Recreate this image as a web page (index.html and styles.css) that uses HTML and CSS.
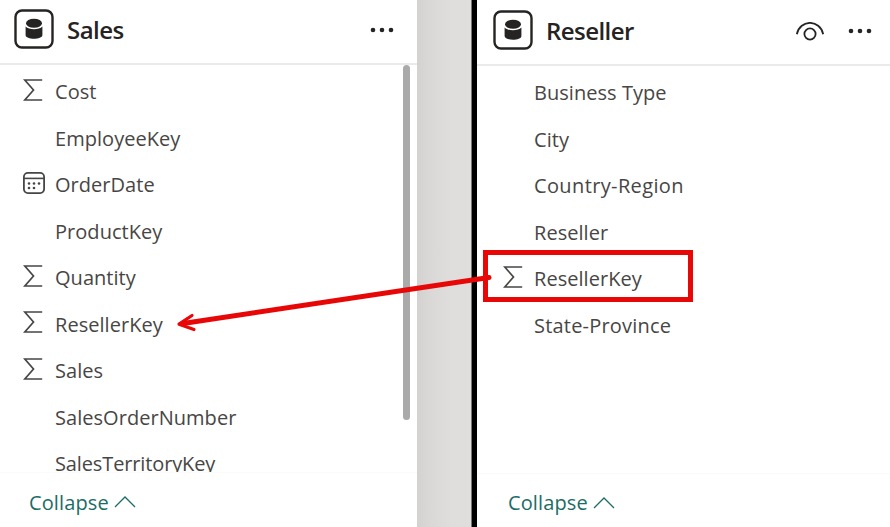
FILE: index.html
```
<!DOCTYPE html>
<html lang="en">
<head>
<meta charset="utf-8">
<title>Model view</title>
<link rel="stylesheet" href="styles.css">
</head>
<body>
<svg class="defs" aria-hidden="true">
  <symbol id="table" viewBox="0 0 40 40"><rect x="1.5" y="1.5" width="37" height="37" rx="6.5" fill="none" stroke="#252423" stroke-width="2.4"/><ellipse cx="20" cy="14.3" rx="8" ry="4.5" fill="#252423"/><path d="M11.6 17.5C15 21.2 25 21.2 28.4 17.5V26C28.4 31 11.6 31 11.6 26Z" fill="#252423"/></symbol>
  <symbol id="sum" viewBox="0 0 20 24"><path d="M19.2 2H1.8L10.5 12L1.8 22H19.2" fill="none" stroke="#484644" stroke-width="1.7"/></symbol>
  <symbol id="calendar" viewBox="0 0 22 22"><rect x=".9" y=".9" width="20.2" height="20.2" rx="4" fill="none" stroke="#484644" stroke-width="1.8"/><path d="M1 6.4H21" stroke="#484644" stroke-width="1.6"/><g fill="#484644"><circle cx="6" cy="11.5" r="1.3"/><circle cx="11" cy="11.5" r="1.3"/><circle cx="16" cy="11.5" r="1.3"/><circle cx="6" cy="16" r="1.3"/><circle cx="11" cy="16" r="1.3"/></g></symbol>
  <symbol id="dots" viewBox="0 0 24 6"><g fill="#252423"><circle cx="3" cy="3" r="2.3"/><circle cx="12" cy="3" r="2.3"/><circle cx="21" cy="3" r="2.3"/></g></symbol>
  <symbol id="eye" viewBox="0 0 28 20"><path d="M.8 12.2C4 -2.9 24 -2.9 27.2 12.2" fill="none" stroke="#252423" stroke-width="1.8"/><circle cx="14" cy="12" r="5.6" fill="none" stroke="#252423" stroke-width="1.8"/></symbol>
  <symbol id="chevron" viewBox="0 0 22 14"><path d="M1 12L11 2L21 12" fill="none" stroke="#1c6c66" stroke-width="1.25"/></symbol>
</svg>
<main class="canvas">
  <section class="card sales">
    <header class="head">
      <svg class="table-icon"><use href="#table"/></svg>
      <h2 class="title">Sales</h2>
      <svg class="dots"><use href="#dots"/></svg>
    </header>
    <div class="body">
      <ul class="fields">
        <li><svg class="sum"><use href="#sum"/></svg><span>Cost</span></li>
        <li><span>EmployeeKey</span></li>
        <li><svg class="calendar"><use href="#calendar"/></svg><span>OrderDate</span></li>
        <li><span>ProductKey</span></li>
        <li><svg class="sum"><use href="#sum"/></svg><span>Quantity</span></li>
        <li><svg class="sum"><use href="#sum"/></svg><span>ResellerKey</span></li>
        <li><svg class="sum"><use href="#sum"/></svg><span>Sales</span></li>
        <li><span>SalesOrderNumber</span></li>
        <li><span class="territory">SalesTerritoryKey</span></li>
      </ul>
      <div class="scrollbar"></div>
    </div>
    <footer class="foot"><span>Collapse</span><svg class="chevron"><use href="#chevron"/></svg></footer>
  </section>
  <div class="gap"></div>
  <section class="card reseller">
    <header class="head">
      <svg class="table-icon"><use href="#table"/></svg>
      <h2 class="title">Reseller</h2>
      <svg class="eye"><use href="#eye"/></svg>
      <svg class="dots"><use href="#dots"/></svg>
    </header>
    <div class="body">
      <ul class="fields">
        <li><span>Business Type</span></li>
        <li><span>City</span></li>
        <li><span class="region">Country-Region</span></li>
        <li><span>Reseller</span></li>
        <li><svg class="sum"><use href="#sum"/></svg><span>ResellerKey</span></li>
        <li><span class="province">State-Province</span></li>
      </ul>
    </div>
    <footer class="foot"><span>Collapse</span><svg class="chevron"><use href="#chevron"/></svg></footer>
  </section>
  <svg class="annotation" viewBox="0 0 890 527" fill="none" stroke="#e80707">
    <rect x="485.5" y="252.5" width="205" height="47" stroke-width="5"/>
    <path d="M489 277.5L183 323.5" stroke-width="5" stroke-linecap="round"/>
    <path d="M192 315.5L179 324.2L194 329.5" stroke-width="3.2" stroke-linecap="round" stroke-linejoin="round"/>
  </svg>
</main>
</body>
</html>
```
FILE: styles.css
```
* { box-sizing: border-box; }
body { margin: 0; overflow: hidden; background: #fff; color: #484644; font-family: "Open Sans", "Noto Sans", sans-serif; font-size: 20px; }
.defs { position: absolute; width: 0; height: 0; }
.canvas { position: relative; display: flex; width: 890px; height: 527px; }
.card { display: flex; flex-direction: column; background: #fff; }
.sales { width: 417px; }
.reseller { width: 413px; padding-top: 1px; }
.gap { width: 60px; border-right: 5px solid #000; background: linear-gradient(90deg, #d3d2d0 0, #d9d8d6 12px, #dfdedc 35px, #dfdedc 54px, #777 54px); }
.head { display: flex; align-items: center; flex: none; height: 65px; padding: 0 23px 6px 14px; border-bottom: 2px solid #eaeaea; }
.reseller .head { padding-left: 16px; padding-right: 18px; }
.table-icon { width: 40px; height: 40px; }
.title { flex: 1; margin: 2px 0 0 13px; color: #252423; font-size: 24px; font-weight: 600; line-height: 34px; letter-spacing: -.55px; }
.dots { width: 24px; height: 6px; margin-top: 3px; }
.eye { width: 28px; height: 20px; margin: 4px 24px 0 0; }
.body { display: flex; flex: none; height: 408px; overflow: hidden; border-bottom: 1px solid #fafafa; }
.fields { flex: 1; margin: 0; padding: 3.3px 0 0; list-style: none; }
.fields li { display: grid; grid-template-columns: 34px 1fr; align-items: center; height: 46.5px; padding-left: 21px; white-space: nowrap; }
.reseller .fields li { grid-template-columns: 33px 1fr; padding-left: 24px; }
.fields span { grid-column: 2; letter-spacing: .04px; }
.fields .territory { letter-spacing: -.13px; }
.fields .region { letter-spacing: .37px; }
.fields .province { letter-spacing: .2px; }
.sum { width: 20px; height: 24px; margin: -4px 0 0 2px; }
.calendar { width: 22px; height: 22px; margin: -3px 0 0 2px; }
.scrollbar { width: 7px; height: 355px; margin-right: 7px; border-radius: 4px; background: #aaa; }
.foot { display: flex; align-items: center; flex: 1; min-height: 0; gap: 5px; padding: 4px 0 0 29px; color: #1c6c66; letter-spacing: .12px; }
.reseller .foot { padding-left: 31px; }
.reseller .sum { margin-left: 1.5px; }
.chevron { width: 22px; height: 14px; }
.annotation { position: absolute; inset: 0; width: 890px; height: 527px; pointer-events: none; }
```
